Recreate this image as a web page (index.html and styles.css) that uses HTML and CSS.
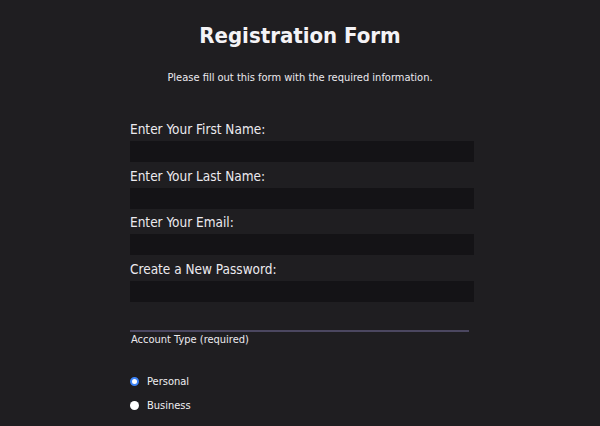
FILE: index.html
```html
<!DOCTYPE html>
<html>
<head>
<meta charset="utf-8">
<link rel="stylesheet" href="styles.css">
</head>
<body>
<div class="page">
  <h1 class="title">Registration Form</h1>
  <p class="subtitle">Please fill out this form with the required information.</p>
  <form class="form">
    <div class="field">
      <label class="label">Enter Your First Name:</label>
      <div class="input"></div>
    </div>
    <div class="field">
      <label class="label">Enter Your Last Name:</label>
      <div class="input"></div>
    </div>
    <div class="field">
      <label class="label">Enter Your Email:</label>
      <div class="input"></div>
    </div>
    <div class="field">
      <label class="label">Create a New Password:</label>
      <div class="input"></div>
    </div>
    <div class="group">
      <div class="legend">Account Type (required)</div>
      <div class="options">
        <div class="option"><span class="radio checked"></span><span>Personal</span></div>
        <div class="option"><span class="radio"></span><span>Business</span></div>
      </div>
    </div>
  </form>
</div>
</body>
</html>
```
FILE: styles.css
```css
html, body {
  margin: 0;
  padding: 0;
  background: #1f1e21;
}
body {
  font-family: "DejaVu Sans Condensed", "DejaVu Sans", Verdana, sans-serif;
  color: #f0eff2;
  width: 600px;
  height: 426px;
  overflow: hidden;
}
.page {
  display: flex;
  flex-direction: column;
  align-items: center;
  padding-top: 22px;
}
.title {
  margin: 0;
  font-family: "DejaVu Sans Condensed", "DejaVu Sans", Verdana, sans-serif;
  font-weight: bold;
  font-size: 22px;
  line-height: 28px;
  color: #f4f3f6;
}
.subtitle {
  margin: 21px 0 0 0;
  font-size: 11px;
  line-height: 13px;
  color: #eceaef;
}
.form {
  width: 344px;
  margin-top: 38px;
  margin-left: 4px;
  display: flex;
  flex-direction: column;
  gap: 6.5px;
}
.field {
  display: flex;
  flex-direction: column;
  gap: 5px;
}
.label {
  font-size: 13.5px;
  line-height: 14px;
  color: #eceaef;
}
.input {
  height: 21px;
  background: #141316;
}
.group {
  margin-top: 21.5px;
  width: 339px;
  border-top: 2px solid #4b4760;
  padding-top: 1px;
}
.legend {
  font-size: 11px;
  line-height: 13px;
  padding-left: 1px;
  color: #eceaef;
}
.options {
  margin-top: 29px;
  display: flex;
  flex-direction: column;
  gap: 11px;
}
.option {
  display: flex;
  align-items: center;
  gap: 8px;
  font-size: 11px;
  line-height: 13px;
}
.radio {
  width: 9px;
  height: 9px;
  border-radius: 50%;
  background: #ffffff;
  box-sizing: border-box;
}
.radio.checked {
  background: #ffffff;
  border: 2.5px solid #3b82f6;
}
```
